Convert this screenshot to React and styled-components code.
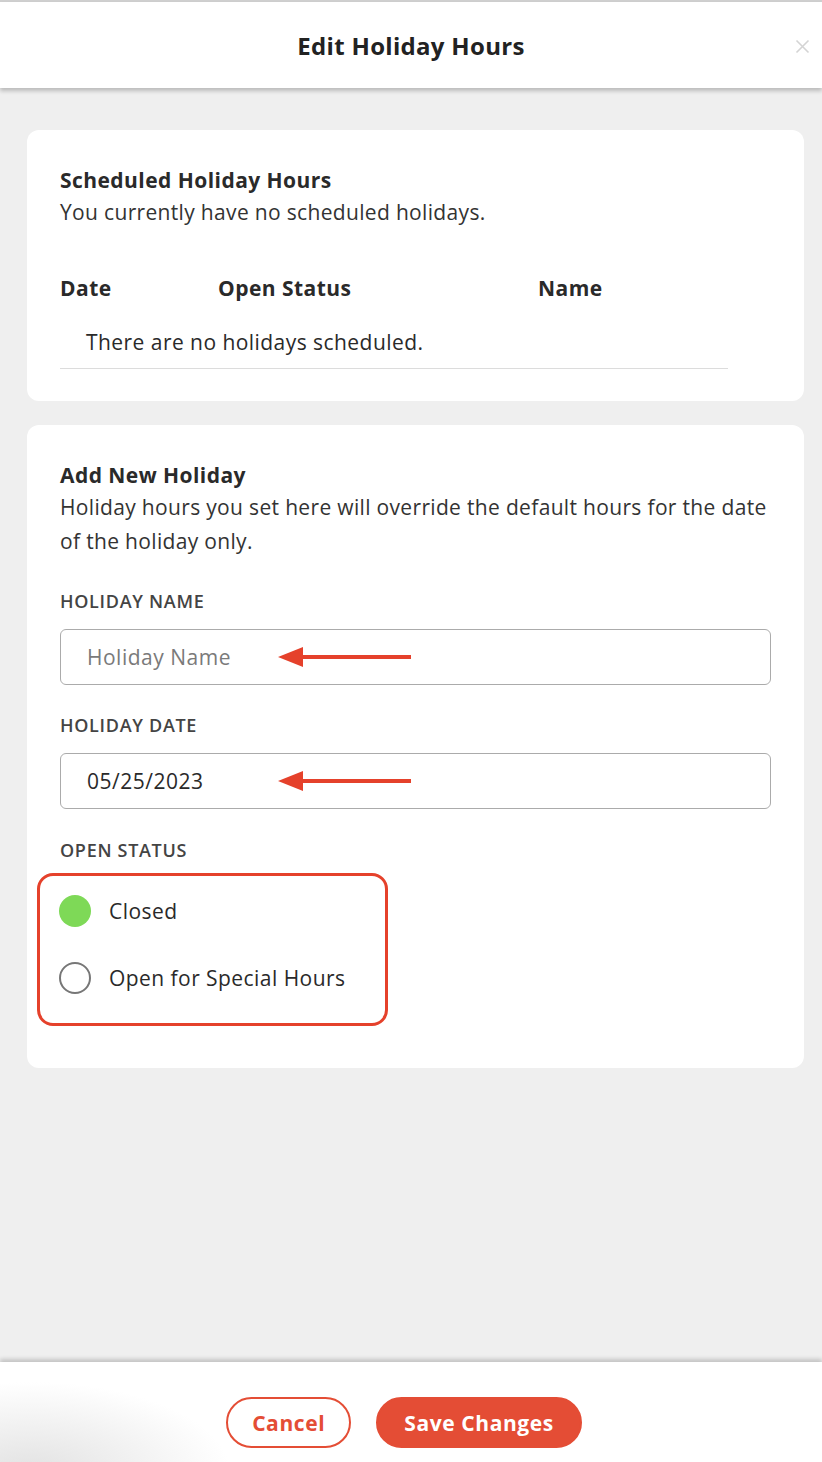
import React from 'react';
import styled, {createGlobalStyle} from 'styled-components';

const GlobalStyle = createGlobalStyle`
  html, body {
    margin: 0;
    padding: 0;
    height: 100%;
    background: #efefef;
    font-family: "Open Sans", "Noto Sans", sans-serif;
    color: #2a2a2a;
  }
  #root {
    height: 100%;
  }
`;

const App = () => {
  return (
    <>
      <GlobalStyle/>
      <Page>
        <Header>
          <Title>Edit Holiday Hours</Title>
          <CloseButton aria-label="close">
            <svg width="15" height="15" viewBox="0 0 15 15">
              <path d="M1.5 1.5L13.5 13.5M13.5 1.5L1.5 13.5" stroke="#d4d4d4" strokeWidth="1.6" fill="none"/>
            </svg>
          </CloseButton>
        </Header>

        <Content>
          <Card>
            <CardTitle>Scheduled Holiday Hours</CardTitle>
            <CardText>You currently have no scheduled holidays.</CardText>
            <TableHead>
              <span>Date</span>
              <span>Open Status</span>
              <span>Name</span>
            </TableHead>
            <EmptyRow>There are no holidays scheduled.</EmptyRow>
          </Card>

          <Card $bottom={42}>
            <CardTitle>Add New Holiday</CardTitle>
            <CardText>
              Holiday hours you set here will override the default hours for the date of the holiday only.
            </CardText>

            <FieldLabel $top={31}>Holiday Name</FieldLabel>
            <InputWrap>
              <Input placeholder="Holiday Name" readOnly/>
              <Arrow/>
            </InputWrap>

            <FieldLabel>Holiday Date</FieldLabel>
            <InputWrap>
              <Input defaultValue="05/25/2023" readOnly/>
              <Arrow/>
            </InputWrap>

            <FieldLabel $top={29} $after={11}>Open Status</FieldLabel>
            <RadioGroup>
              <RadioRow>
                <Radio $checked/>
                <RadioText>Closed</RadioText>
              </RadioRow>
              <RadioRow>
                <Radio/>
                <RadioText>Open for Special Hours</RadioText>
              </RadioRow>
            </RadioGroup>
          </Card>
        </Content>

        <Footer>
          <Button $outline>Cancel</Button>
          <Button>Save Changes</Button>
        </Footer>
      </Page>
    </>
  );
};

const Arrow = () => (
  <ArrowSvg width="134" height="22" viewBox="0 0 134 22">
    <path d="M20 11H133" stroke="#e5412b" strokeWidth="4" fill="none"/>
    <path d="M0 11L25 1V21Z" fill="#e5412b"/>
  </ArrowSvg>
);

export default App;

const Page = styled.div`
  display: flex;
  flex-direction: column;
  height: 100vh;
  border-top: 2px solid #cfcfcf;
  box-sizing: border-box;
`;

const Header = styled.header`
  position: relative;
  display: flex;
  align-items: center;
  justify-content: center;
  height: 86px;
  background: #fff;
  box-shadow: 0 3px 4px rgba(0, 0, 0, 0.22);
  z-index: 1;
`;

const Title = styled.h1`
  margin: 0;
  font-size: 24px;
  font-weight: 700;
  letter-spacing: 0.3px;
  color: #222;
`;

const CloseButton = styled.button`
  position: absolute;
  right: 12px;
  top: 37px;
  padding: 0;
  border: none;
  background: none;
  display: flex;
`;

const Content = styled.main`
  flex: 1;
  display: flex;
  flex-direction: column;
  gap: 24px;
  padding: 42px 18px 0 27px;
`;

const Card = styled.section`
  background: #fff;
  border-radius: 12px;
  padding: 35px 33px ${p => p.$bottom || 32}px;
`;

const CardTitle = styled.h2`
  margin: 0;
  font-size: 21px;
  font-weight: 700;
  line-height: 30px;
  letter-spacing: 0.45px;
  color: #2a2a2a;
`;

const CardText = styled.p`
  margin: 0;
  font-size: 21px;
  line-height: 34px;
  letter-spacing: 0.33px;
  color: #333;
`;

const TableHead = styled.div`
  display: grid;
  grid-template-columns: 158px 320px 1fr;
  margin-top: 44px;
  font-size: 21px;
  font-weight: 700;
  line-height: 30px;
  letter-spacing: 0.45px;
  color: #2a2a2a;
`;

const EmptyRow = styled.div`
  width: 668px;
  margin-top: 24px;
  padding: 0 0 11px 26px;
  box-sizing: border-box;
  border-bottom: 1px solid #dcdcdc;
  font-size: 21px;
  line-height: 30px;
  letter-spacing: 0.45px;
  color: #2a2a2a;
`;

const FieldLabel = styled.div`
  margin-top: ${p => p.$top || 28}px;
  margin-bottom: ${p => p.$after || 16}px;
  font-size: 18px;
  font-weight: 600;
  letter-spacing: 0.7px;
  text-transform: uppercase;
  color: #444;
  line-height: 24px;
`;

const InputWrap = styled.div`
  position: relative;
`;

const Input = styled.input`
  display: block;
  width: 100%;
  height: 56px;
  box-sizing: border-box;
  padding: 0 26px;
  border: 1px solid #ababab;
  border-radius: 6px;
  font-family: inherit;
  font-size: 21px;
  letter-spacing: 0.5px;
  color: #2a2a2a;
  outline: none;
  &::placeholder {
    color: #7a7a7a;
  }
`;

const ArrowSvg = styled.svg`
  position: absolute;
  left: 218px;
  top: 17px;
  pointer-events: none;
`;

const RadioGroup = styled.div`
  display: flex;
  flex-direction: column;
  gap: 35px;
  width: 351px;
  box-sizing: border-box;
  margin-left: -23px;
  padding: 19px 20px 29px 19px;
  border: 3px solid #e5412b;
  border-radius: 16px;
`;

const RadioRow = styled.label`
  display: flex;
  align-items: center;
  gap: 18px;
`;

const Radio = styled.span`
  flex: none;
  width: 32px;
  height: 32px;
  box-sizing: border-box;
  border-radius: 50%;
  background: ${p => p.$checked ? '#7ed957' : '#fff'};
  border: ${p => p.$checked ? 'none' : '2.5px solid #777'};
`;

const RadioText = styled.span`
  font-size: 21px;
  letter-spacing: 0.45px;
  color: #2a2a2a;
`;

const Footer = styled.footer`
  display: flex;
  justify-content: center;
  align-items: flex-start;
  gap: 25px;
  height: 100px;
  box-sizing: border-box;
  padding: 35px 14px 0 0;
  background: radial-gradient(ellipse 200px 90px at 30px 110px, #e2e2e2, #fff);
  box-shadow: 0 -3px 4px rgba(0, 0, 0, 0.18);
`;

const Button = styled.button`
  height: 51px;
  padding: 0 ${p => p.$outline ? 24 : 26}px;
  border-radius: 26px;
  font-family: inherit;
  font-size: 21px;
  font-weight: 700;
  letter-spacing: 0.6px;
  border: 2px solid #e44d35;
  background: ${p => p.$outline ? '#fff' : '#e44d35'};
  color: ${p => p.$outline ? '#e44d35' : '#fff'};
`;
